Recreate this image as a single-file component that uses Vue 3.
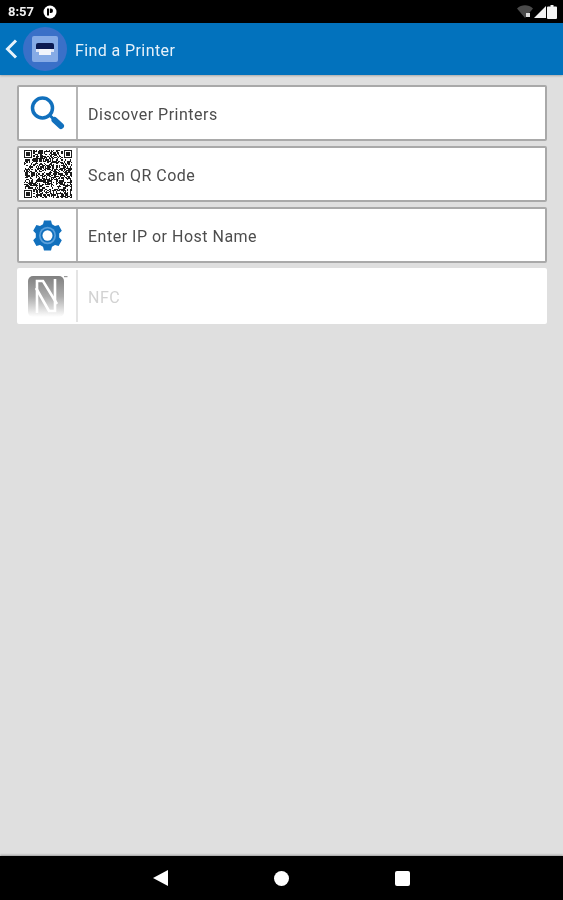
<template>
  <div class="screen">
    <div class="status-bar">
      <div class="status-left">
        <span class="clock">8:57</span>
        <svg class="status-badge" width="14" height="14" viewBox="0 0 14 14">
          <circle cx="7" cy="7" r="6.500" fill="#fff" />
          <rect x="4" y="3.500" width="2" height="7" fill="#000" />
          <path d="M6.800 3.500h1a2.200 2.200 0 0 1 0 4.400h-1z" fill="#000" />
        </svg>
      </div>
      <div class="status-right">
        <svg width="16" height="13" viewBox="0 0 16 13">
          <path d="M0 3.500C4.500-.8 11.500-.8 16 3.500L8 13z" fill="#4a4a4a" />
          <rect x="9" y="8" width="4" height="4" fill="#ddd" />
        </svg>
        <svg width="12" height="12" viewBox="0 0 12 12">
          <path d="M12 0v12H0z" fill="#f2f2f2" />
        </svg>
        <svg width="10" height="14" viewBox="0 0 10 14">
          <path d="M3.500 0h3v1.500h2.500a1 1 0 0 1 1 1V13a1 1 0 0 1-1 1H1a1 1 0 0 1-1-1V2.500a1 1 0 0 1 1-1h2.500z" fill="#f5f5f5" />
        </svg>
      </div>
    </div>

    <header class="app-bar">
      <svg class="back" width="14" height="22" viewBox="0 0 14 22">
        <path d="M12 2.500L3.500 11l8.500 8.500" fill="none" stroke="#e8f2fa" stroke-width="3" />
      </svg>
      <div class="printer-halo">
        <div class="printer-tile">
          <svg width="18" height="14" viewBox="0 0 18 14">
            <path d="M0 9V3q0-2 2-2h14q2 0 2 2v6z" fill="#0b1a52" />
            <rect x="0" y="7" width="3" height="3" fill="#dfe7f7" />
            <rect x="15" y="7" width="3" height="3" fill="#dfe7f7" />
            <rect x="3" y="7" width="12" height="6" fill="#f1f4fb" />
          </svg>
        </div>
      </div>
      <h1 class="title">Find a Printer</h1>
    </header>

    <main class="content">
      <div v-for="item in items" :key="item.label" class="option" :class="{ disabled: item.disabled }">
        <div class="option-icon">
          <svg v-if="item.icon === 'search'" width="36" height="36" viewBox="0 0 36 36">
            <circle cx="12.500" cy="13" r="10" fill="none" stroke="#1170bd" stroke-width="3.500" />
            <path d="M20 20.500l4.500 4.500" stroke="#1170bd" stroke-width="3" />
            <path d="M24.500 25l6.500 6" stroke="#1170bd" stroke-width="6" stroke-linecap="round" />
          </svg>

          <svg v-else-if="item.icon === 'qr'" class="qr" width="48" height="48" viewBox="0 0 41 41" shape-rendering="crispEdges">
            <rect v-for="c in qrCells" :key="c.k" :x="c.x" :y="c.y" width="1" height="1" fill="#1a1a1a" />
          </svg>

          <svg v-else-if="item.icon === 'gear'" width="29" height="33" viewBox="0 0 29 32" preserveAspectRatio="none">
            <path d="M11 1.500h7l1 3.500 3 1.700 3.600-.9 3.200 5.700-2.600 2.600v3.800l2.600 2.600-3.200 5.700-3.600-.9-3 1.700-1 3.500h-7l-1-3.500-3-1.700-3.600.9-3.200-5.700 2.600-2.600v-3.800l-2.600-2.600 3.200-5.700 3.600.9 3-1.700z" fill="#1170bd" />
            <circle cx="14.500" cy="16" r="8.500" fill="#5aa0dc" />
            <circle cx="14.500" cy="16" r="6.800" fill="#1170bd" />
            <circle cx="14.500" cy="16" r="5" fill="#fff" />
          </svg>

          <svg v-else width="40" height="44" viewBox="0 0 40 44">
            <defs>
              <linearGradient id="nfcFade" x1="0" y1="0" x2="0" y2="1">
                <stop offset="0" stop-color="#808080" />
                <stop offset="0.5" stop-color="#ababab" />
                <stop offset="1" stop-color="#fff" />
              </linearGradient>
            </defs>
            <rect x="0" y="2" width="36" height="41" rx="5" fill="url(#nfcFade)" />
            <path d="M9 39V7h6l14 23" fill="none" stroke="#fff" stroke-width="2.600" />
            <path d="M27 5v32h-6L8 14" fill="none" stroke="#fff" stroke-width="2.600" />
            <rect x="36" y="2" width="3.500" height="1.200" fill="#999" />
          </svg>
        </div>
        <span class="option-label">{{ item.label }}</span>
      </div>
    </main>

    <nav class="nav-bar">
      <svg width="15" height="16" viewBox="0 0 15 16"><path d="M15 0v16L0 8z" fill="#fff" /></svg>
      <span class="nav-home"></span>
      <span class="nav-recent"></span>
    </nav>
  </div>
</template>

<script setup>
import { computed } from 'vue'

const items = [
  { label: 'Discover Printers', icon: 'search' },
  { label: 'Scan QR Code', icon: 'qr' },
  { label: 'Enter IP or Host Name', icon: 'gear' },
  { label: 'NFC', icon: 'nfc', disabled: true }
]

// finder squares + pseudo random data, looks like the real code at this size
const qrCells = computed(() => {
  const size = 41
  const cells = []
  let seed = 57
  const inFinder = (x, y, ox, oy, n) => x >= ox && x < ox + n && y >= oy && y < oy + n
  for (let y = 0; y < size; y++) {
    for (let x = 0; x < size; x++) {
      let on
      const corners = [[0, 0], [size - 7, 0], [0, size - 7]]
      const corner = corners.find(([ox, oy]) => inFinder(x, y, ox, oy, 7))
      const near = corners.some(([ox, oy]) => inFinder(x, y, ox - 1, oy - 1, 9))
      if (corner) {
        const dx = x - corner[0]
        const dy = y - corner[1]
        on = dx === 0 || dx === 6 || dy === 0 || dy === 6 || (dx >= 2 && dx <= 4 && dy >= 2 && dy <= 4)
      } else if (near) {
        on = false
      } else {
        seed = (seed * 1103515245 + 12345) & 0x7fffffff
        on = (seed >> 16) % 100 < 52
      }
      if (on) cells.push({ k: x + '-' + y, x, y })
    }
  }
  return cells
})
</script>

<style scoped>
.screen {
  width: 563px;
  height: 900px;
  display: flex;
  flex-direction: column;
  background: #dfdfdf;
  font-family: Roboto, "Liberation Sans", sans-serif;
  overflow: hidden;
  filter: blur(0.45px);
}

.status-bar {
  height: 23px;
  flex-shrink: 0;
  background: #000;
  display: flex;
  justify-content: space-between;
  align-items: center;
  padding: 0 6px 0 8px;
}

.status-left {
  display: flex;
  align-items: center;
  gap: 9px;
}

.clock {
  color: #f0f0f0;
  font-size: 13px;
  font-weight: 700;
}

.status-right {
  display: flex;
  align-items: center;
  gap: 1px;
}

.app-bar {
  height: 52px;
  flex-shrink: 0;
  background: #0272bd;
  display: flex;
  align-items: center;
  padding-left: 4px;
  box-shadow: 0 1px 2px rgba(0, 0, 0, 0.25);
}

.printer-halo {
  width: 44px;
  height: 44px;
  margin-left: 5px;
  border-radius: 50%;
  background: #3a70c8;
  display: flex;
  align-items: center;
  justify-content: center;
}

.printer-tile {
  width: 26px;
  height: 26px;
  border-radius: 2px;
  background: #86abe6;
  display: flex;
  align-items: center;
  justify-content: center;
}

.title {
  margin: 2px 0 0 8px;
  font-size: 16px;
  font-weight: 400;
  letter-spacing: 0.4px;
  color: #e6f1fa;
}

.content {
  flex: 1;
  padding: 10px 16px 0 17px;
  display: flex;
  flex-direction: column;
  gap: 5px;
}

.option {
  height: 56px;
  box-sizing: border-box;
  display: flex;
  align-items: center;
  background: #fff;
  border: 2px solid #a9a9a9;
  border-radius: 2px;
}

.option-icon {
  width: 59px;
  height: 100%;
  flex-shrink: 0;
  box-sizing: border-box;
  display: flex;
  align-items: center;
  justify-content: center;
  border-right: 2px solid #b5b5b5;
}

.option-label {
  padding: 2px 0 0 10px;
  font-size: 16px;
  letter-spacing: 0.5px;
  color: #4d4d4d;
}

.option.disabled {
  border-color: #fff;
}

.option.disabled .option-icon {
  border-right-color: #e4e4e4;
}

.option.disabled .option-label {
  color: #d2d2d2;
}

.nav-bar {
  height: 44px;
  flex-shrink: 0;
  background: #000;
  display: flex;
  align-items: center;
  justify-content: space-between;
  padding: 0 153px;
  box-shadow: 0 -1px 2px rgba(0, 0, 0, 0.3);
}

.nav-home {
  width: 15px;
  height: 15px;
  border-radius: 50%;
  background: #fff;
}

.nav-recent {
  width: 15px;
  height: 15px;
  border-radius: 2px;
  background: #fff;
}
</style>

<style>
html, body {
  margin: 0;
  background: #dfdfdf;
}
</style>
